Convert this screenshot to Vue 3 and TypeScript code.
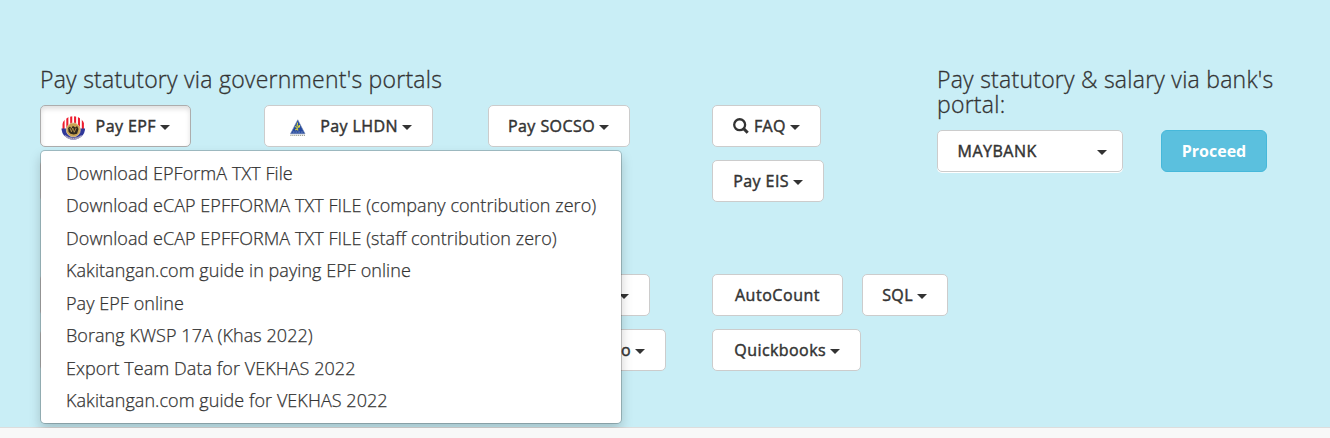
<script setup lang="ts">
interface PortalButton {
  label: string
  width: number
  icon?: 'epf' | 'lhdn' | 'search'
  caret?: boolean
  active?: boolean
}

const row = (...cells: PortalButton[][]): PortalButton[][] => cells

const portalRows: PortalButton[][][] = [
  row(
    [{ label: 'Pay EPF', width: 151, icon: 'epf', caret: true, active: true }],
    [{ label: 'Pay LHDN', width: 169, icon: 'lhdn', caret: true }],
    [{ label: 'Pay SOCSO', width: 142, caret: true }],
    [{ label: 'FAQ', width: 109, icon: 'search', caret: true }],
  ),
  row([{ label: '', width: 151 }], [], [], [{ label: 'Pay EIS', width: 112, caret: true }]),
]

const softwareRows: PortalButton[][][] = [
  row(
    [{ label: '', width: 151 }],
    [],
    [{ label: '', width: 162, caret: true }],
    [{ label: 'AutoCount', width: 131 }, { label: 'SQL', width: 86, caret: true }],
  ),
  row(
    [{ label: '', width: 151 }],
    [],
    [{ label: 'o', width: 178, caret: true }],
    [{ label: 'Quickbooks', width: 149, caret: true }],
  ),
]

const groups = [portalRows, softwareRows]

const menuItems: string[] = [
  'Download EPFormA TXT File',
  'Download eCAP EPFFORMA TXT FILE (company contribution zero)',
  'Download eCAP EPFFORMA TXT FILE (staff contribution zero)',
  'Kakitangan.com guide in paying EPF online',
  'Pay EPF online',
  'Borang KWSP 17A (Khas 2022)',
  'Export Team Data for VEKHAS 2022',
  'Kakitangan.com guide for VEKHAS 2022',
]
</script>

<template>
  <main class="panel">
    <section class="gov">
      <h3 class="title">Pay statutory via government's portals</h3>
      <div v-for="(rows, g) in groups" :key="g" class="group">
        <div v-for="(cells, r) in rows" :key="r" class="btn-row">
          <div v-for="(cell, c) in cells" :key="c" class="cell">
            <button
              v-for="(b, i) in cell"
              :key="i"
              type="button"
              class="btn"
              :class="{ active: b.active, plain: !b.caret }"
              :style="{ width: b.width + 'px' }"
            >
              <svg v-if="b.icon === 'epf'" class="logo epf" viewBox="0 0 26 26">
                <defs>
                  <clipPath id="disc"><circle cx="13" cy="13" r="12.5" /></clipPath>
                </defs>
                <g clip-path="url(#disc)">
                  <rect width="26" height="26" fill="#fff" />
                  <path d="M1.6 0h2.2v14H1.6zM5.6 0h2.2v14H5.6zM9.7 0h2.2v14H9.7zM13.8 0H16v14h-2.2zM17.9 0h2.2v14h-2.2zM22 0h2.2v14H22z" fill="#ed1c2e" />
                  <path d="M0 13.5h26V26H0z" fill="#30389a" />
                  <path d="M4 20.5q9 6 18 0l-1 6H5z" fill="#b9b2cc" />
                  <path d="M6 22q7 4 14 0" stroke="#656090" stroke-width="1" stroke-dasharray="1 1" fill="none" />
                </g>
                <circle cx="13" cy="15" r="7.4" fill="#c8a252" stroke="#e0cfa2" stroke-width=".8" />
                <path d="M7.5 13l2-1.5 1.5 2 1.5-3 2.5 2 2-1.5 1.5 3-1.5 5-3.5 1-3.5-1-2-2z" fill="#30291f" />
                <path d="M9.5 13l1.5 4 1.5-4 1.5 4.5 2-4.5" stroke="#c8a252" stroke-width=".8" fill="none" />
              </svg>
              <svg v-else-if="b.icon === 'lhdn'" class="logo lhdn" viewBox="0 0 26 26">
                <path d="M13.2 4.5L20.7 19H5.7z" fill="#2448a0" stroke="#6f83ac" stroke-width=".6" />
                <path d="M13 7.5l-.5 3 2 1-2 2 1 2M10.5 11.5l2 1M15 10v2.5M10.5 15l2-1" stroke="#d7d43c" stroke-width="1.1" fill="none" />
                <path d="M8 17.2h10.5" stroke="#8a9fc5" stroke-width=".8" stroke-dasharray="2 .8" />
                <path d="M5.5 20.6h15.5" stroke="#a3a596" stroke-width="1.2" stroke-dasharray="1.2 .8" />
              </svg>
              <svg v-else-if="b.icon === 'search'" class="search" viewBox="0 0 16 16">
                <circle cx="6.7" cy="6.7" r="5.5" fill="none" stroke="#333" stroke-width="2.3" />
                <path d="M10.4 10.4l4.4 4.4" stroke="#333" stroke-width="3" />
              </svg>
              <span v-if="b.label" class="label">{{ b.label }}</span>
              <span v-if="b.caret" class="caret"></span>
            </button>
            <ul v-if="cell[0]?.active" class="menu">
              <li v-for="item in menuItems" :key="item">{{ item }}</li>
            </ul>
          </div>
        </div>
      </div>
    </section>
    <section class="bank">
      <h3 class="title">Pay statutory &amp; salary via bank's portal:</h3>
      <div class="bank-row">
        <button type="button" class="btn select">
          <span class="label">MAYBANK</span>
          <span class="caret"></span>
        </button>
        <button type="button" class="btn proceed"><span class="label">Proceed</span></button>
      </div>
    </section>
  </main>
</template>

<style>
body {
  margin: 0;
  background: #f8f8f8;
  overflow: hidden;
}
</style>

<style scoped>
* {
  box-sizing: border-box;
}
.panel {
  display: flex;
  height: 428px;
  padding: 67px 40px 0;
  background: #c9eef6;
  border-bottom: 1px solid #dddddd;
  color: #333;
  font-family: 'Open Sans', 'Noto Sans', sans-serif;
}
.gov {
  width: 897px;
  flex: none;
}
.bank {
  width: 353px;
}
.title {
  margin: 0 0 13px;
  font-size: 23px;
  line-height: 25px;
  font-weight: 300;
  letter-spacing: 0.24px;
  -webkit-text-stroke: 0.3px #333;
  white-space: nowrap;
}
.bank .title {
  white-space: normal;
}
.group {
  display: flex;
  flex-direction: column;
  gap: 13px;
  margin-bottom: 72px;
}
.btn-row {
  display: grid;
  grid-template-columns: repeat(4, 224px);
  height: 42px;
}
.cell {
  position: relative;
  display: flex;
  gap: 19px;
}
.btn {
  display: flex;
  flex: none;
  align-items: center;
  justify-content: flex-end;
  height: 42px;
  margin: 0;
  padding: 0 20px;
  border: 1px solid #ccc;
  border-radius: 5px;
  background: #fff;
  color: #333;
  font-family: inherit;
  font-size: 16px;
  font-weight: 400;
  letter-spacing: 0.42px;
  -webkit-text-stroke: 0.45px currentColor;
  line-height: 22px;
  white-space: nowrap;
}
.btn.plain {
  justify-content: center;
  letter-spacing: 0.55px;
}
.btn.active {
  border-color: #adadad;
  box-shadow: inset 0 3px 5px rgba(0, 0, 0, 0.125);
}
.caret {
  width: 0;
  height: 0;
  margin: 3px 0 0 4px;
  border-top: 5px solid #333;
  border-left: 5px solid transparent;
  border-right: 5px solid transparent;
}
.logo {
  width: 26px;
  height: 26px;
  margin: 3px 10px 0 0;
}
.search {
  width: 16px;
  height: 16px;
  margin-right: 5px;
}
.menu {
  position: absolute;
  z-index: 10;
  top: 45px;
  left: 0;
  width: 582px;
  height: 274px;
  margin: 0;
  padding: 6px 0 5px;
  list-style: none;
  background: #fff;
  background-clip: padding-box;
  border: 1px solid rgba(0, 0, 0, 0.2);
  border-radius: 5px;
  box-shadow: 0 6px 12px rgba(0, 0, 0, 0.175);
}
.menu li {
  height: 32.46px;
  padding-left: 25px;
  font-size: 18px;
  font-weight: 300;
  letter-spacing: 0.06px;
  -webkit-text-stroke: 0.25px #333;
  line-height: 32.46px;
  white-space: nowrap;
}
.bank-row {
  display: flex;
  gap: 38px;
}
.select {
  width: 186px;
  justify-content: space-between;
  padding-left: 19.5px;
  padding-right: 15px;
  box-shadow: 0 1px 0 #fff;
  letter-spacing: 0.5px;
}
.proceed {
  width: 106px;
  justify-content: center;
  background: #5bc0de;
  border-color: #46b8da;
  border-radius: 6px;
  color: #fff;
  font-weight: 700;
  letter-spacing: 0;
  -webkit-text-stroke: 0;
}
</style>
